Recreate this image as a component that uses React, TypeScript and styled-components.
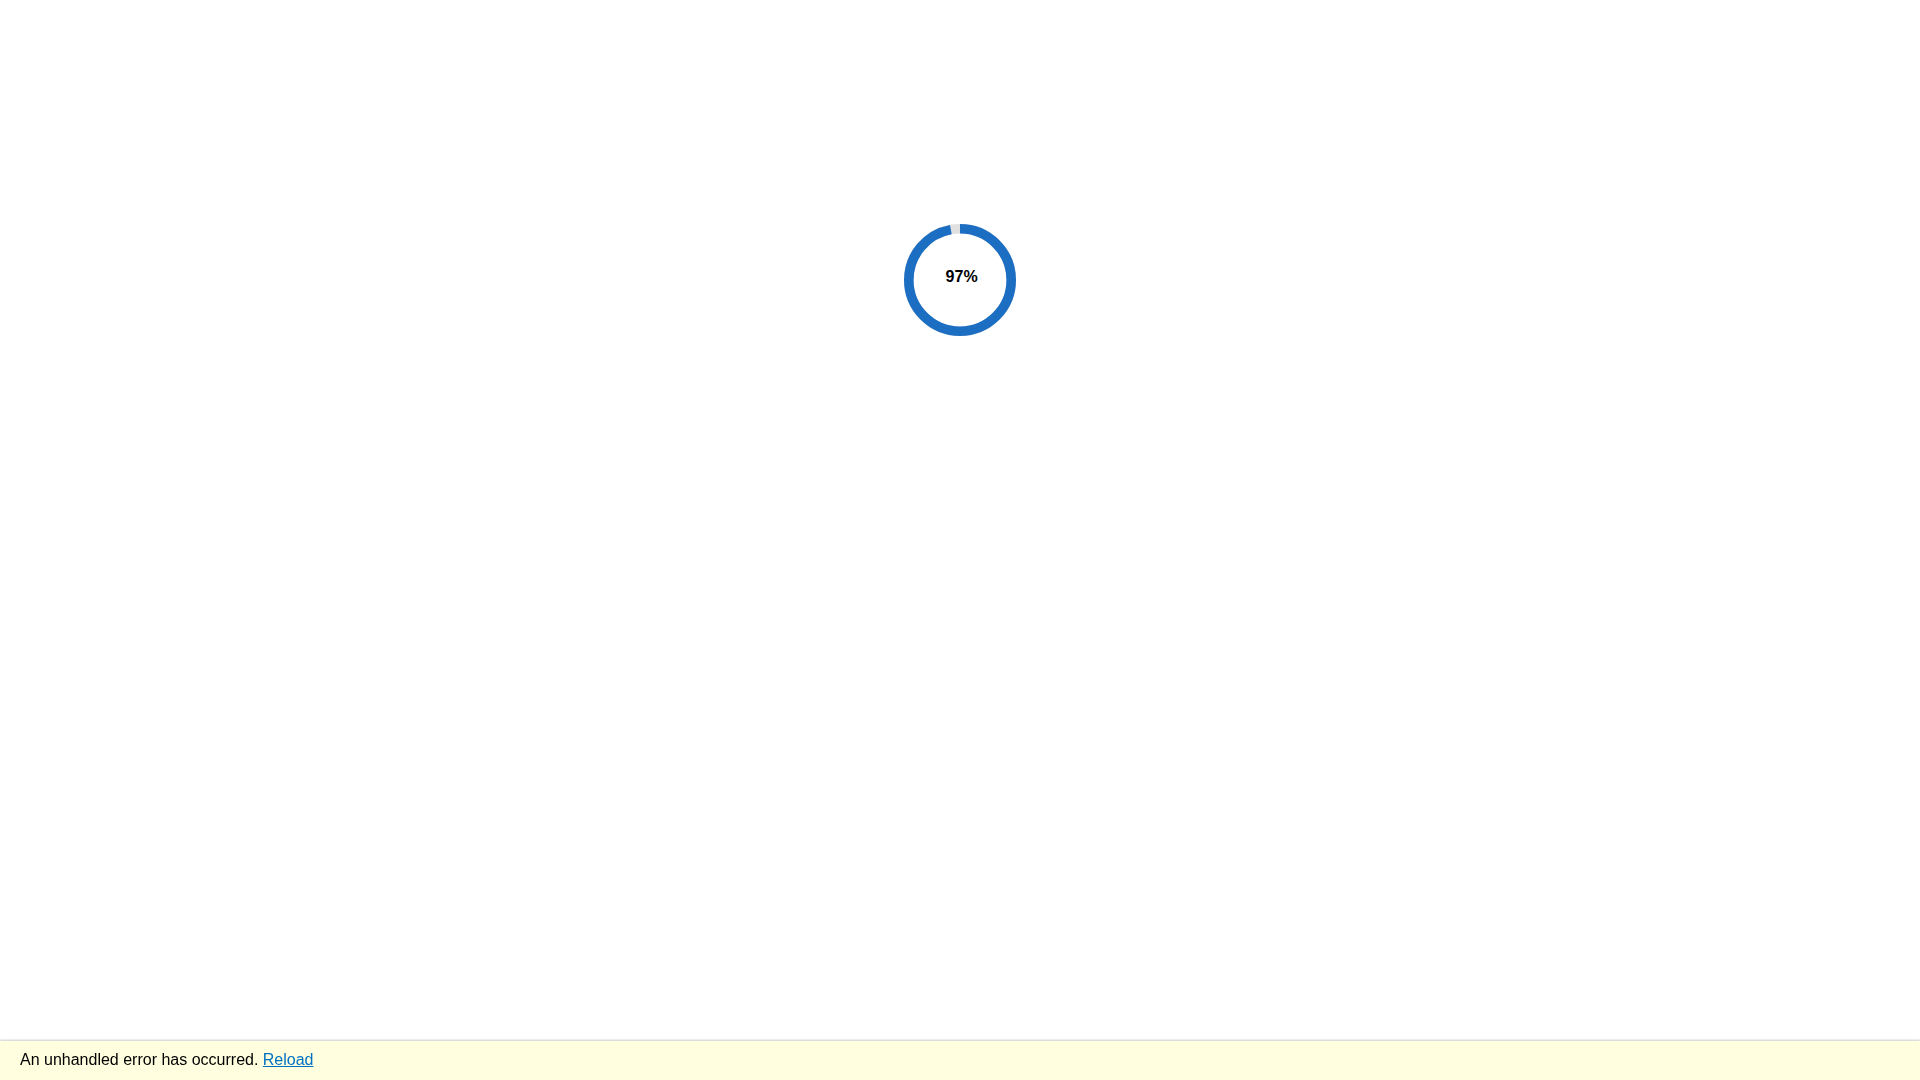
import React from "react";
import styled, { createGlobalStyle } from "styled-components";

const percent = 97;

function App() {
  const size = 128;
  const radius = size * 0.4;
  const dash = 3.141 * (percent / 100) * 0.8 * size;

  return (
    <>
      <GlobalStyle />
      <Loader>
        <Ring width={size} height={size} viewBox={`0 0 ${size} ${size}`}>
          <Track cx={size / 2} cy={size / 2} r={radius} />
          <Progress
            cx={size / 2}
            cy={size / 2}
            r={radius}
            strokeDasharray={`${dash} ${size * 5}`}
          />
        </Ring>
        <ProgressText>{percent}%</ProgressText>
      </Loader>
      <ErrorBar>
        An unhandled error has occurred. <ReloadLink href="#">Reload</ReloadLink>
      </ErrorBar>
    </>
  );
}

const GlobalStyle = createGlobalStyle`
  html, body {
    margin: 0;
    padding: 0;
    background: #ffffff;
    font-family: "Liberation Sans", Arial, Helvetica, sans-serif;
    font-size: 16px;
    color: #000000;
  }
`;

const Loader = styled.div`
  position: relative;
  width: 8rem;
  height: 8rem;
  margin: 20vh auto 1rem auto;
`;

const Ring = styled.svg`
  display: block;
  width: 8rem;
  height: 8rem;
`;

const Track = styled.circle`
  fill: none;
  stroke: #e0e0e0;
  stroke-width: 0.6rem;
  transform-origin: 50% 50%;
  transform: rotate(-90deg);
`;

const Progress = styled(Track)`
  stroke: #1b6ec2;
`;

// sits over the ring
const ProgressText = styled.div`
  position: absolute;
  top: 3.25rem;
  left: 0.2rem;
  right: 0;
  text-align: center;
  font-weight: bold;
`;

const ErrorBar = styled.div`
  position: fixed;
  left: 0;
  bottom: 0;
  width: 100%;
  box-sizing: border-box;
  background: lightyellow;
  box-shadow: 0 -1px 2px rgba(0, 0, 0, 0.2);
  padding: 0.6rem 1.25rem 0.7rem 1.25rem;
  z-index: 1000;
`;

const ReloadLink = styled.a`
  color: #0071c1;
  text-decoration: underline;
`;

export default App;
